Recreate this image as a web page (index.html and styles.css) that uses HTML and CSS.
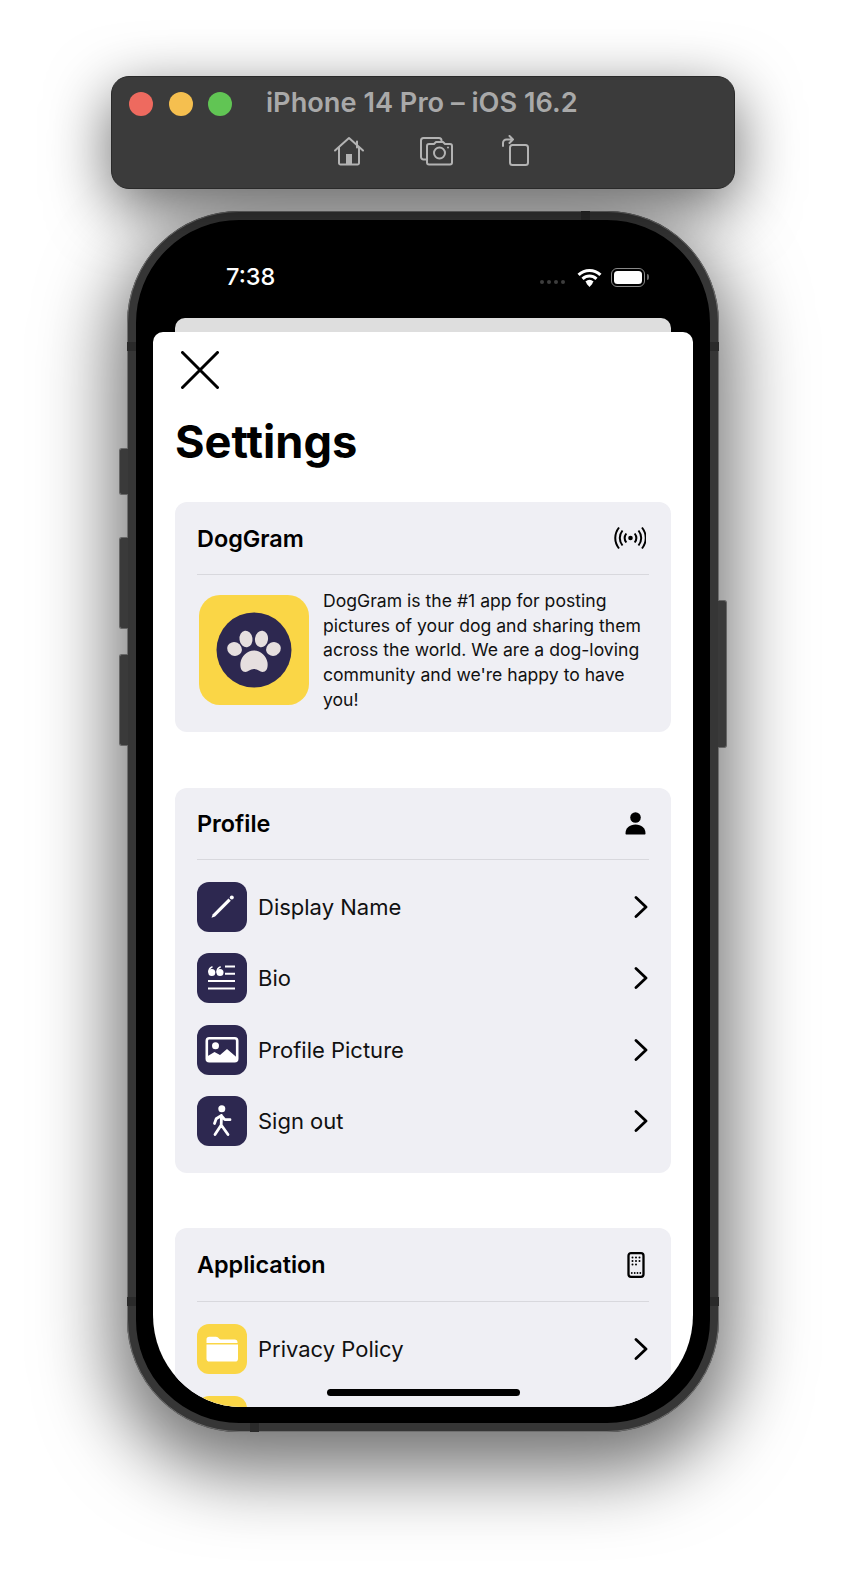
FILE: index.html
```html
<!DOCTYPE html>
<html lang="en">
<head>
<meta charset="utf-8">
<title>DogGram Settings</title>
<link rel="stylesheet" href="styles.css">
</head>
<body>
<div class="stage">
  <header class="toolbar">
    <div class="toolbar-top">
      <div class="lights"><span class="light red"></span><span class="light yellow"></span><span class="light green"></span></div>
      <div class="sim-title">iPhone 14 Pro – iOS 16.2</div>
    </div>
    <div class="toolbar-icons">
      <svg class="tool" width="32" height="32" viewBox="0 0 32 32"><path d="M2 15.500 16 3l14 12.500M6 12.500V28a1.500 1.500 0 0 0 1.500 1.500h17A1.500 1.500 0 0 0 26 28V12.500M24 6.500v6" /><rect class="solid" x="13" y="19" width="6" height="10.500"/></svg>
      <svg class="tool" width="34" height="30" viewBox="0 0 34 30"><path d="M7 23.500H4.500A2.500 2.500 0 0 1 2 21V4.500A2.500 2.500 0 0 1 4.500 2H20a2.500 2.500 0 0 1 2.500 2.500V6"/><path d="M10 8h5l2-2h7l2 2h5a2 2 0 0 1 2 2v16.500a2 2 0 0 1-2 2H10a2 2 0 0 1-2-2V10a2 2 0 0 1 2-2z"/><circle cx="20.500" cy="17" r="5.500"/><circle class="solid" cx="29" cy="11.500" r="1"/></svg>
      <svg class="tool tool-rotate" width="30" height="32" viewBox="0 0 30 32"><rect x="9" y="10" width="18" height="20" rx="2.500"/><path d="M2 11V8a3.500 3.500 0 0 1 3.500-3.500H12M8.500 1 12 4.500 8.500 8"/></svg>
    </div>
  </header>

  <main class="phone">
    <span class="btn btn-mute"></span>
    <span class="btn btn-up"></span>
    <span class="btn btn-down"></span>
    <span class="btn btn-power"></span>
    <span class="band band-l1"></span>
    <span class="band band-r1"></span>
    <span class="band band-l2"></span>
    <span class="band band-r2"></span>
    <span class="band band-top"></span>
    <span class="band band-bottom"></span>

    <div class="status">
      <div class="time">7:38</div>
      <div class="status-right">
        <div class="dots"><i></i><i></i><i></i><i></i></div>
        <svg class="wifi-icon" width="25" height="19" viewBox="0 0 24 18"><path class="wifi" d="M1.500 6.500C7.500.8 16.500.8 22.500 6.500M5.300 10.300c4-3.700 9.400-3.700 13.400 0M9 14c1.900-1.500 4.100-1.500 6 0"/><path class="wifi-dot" d="M12 18l-3-3.200c1.800-1.300 4.200-1.300 6 0z"/></svg>
        <div class="battery"><div class="battery-fill"></div></div>
      </div>
    </div>

    <div class="behind"></div>
    <div class="sheet">
      <svg class="close" width="38" height="38" viewBox="0 0 38 38"><path d="M1.500 1.500l35 35M36.500 1.500l-35 35"/></svg>
      <h1 class="title">Settings</h1>

      <section class="card card-first">
        <div class="card-head">
          <h2>DogGram</h2>
          <svg class="head-icon radio" width="32" height="24" viewBox="3 0 29 24"><circle cx="18" cy="12" r="2.300" class="fill"/><path d="M13.800 7.500c-2 2.700-2 6.300 0 9M22.200 7.500c2 2.700 2 6.300 0 9M10 4.500c-3.600 4.500-3.600 10.500 0 15M26 4.500c3.600 4.500 3.600 10.500 0 15M6.500 1.500c-5 6.500-5 14.500 0 21M29.500 1.500c5 6.500 5 14.500 0 21"/></svg>
        </div>
        <div class="about">
          <svg class="logo" width="110" height="110" viewBox="0 0 110 110">
            <rect width="110" height="110" rx="21" fill="#fad646"/>
            <circle cx="55" cy="55" r="37.500" fill="#2d2850"/>
            <g fill="#e6dfdf">
              <ellipse cx="35.500" cy="54" rx="7.500" ry="6.800" transform="rotate(25 35.500 54)"/>
              <ellipse cx="47" cy="44" rx="6.500" ry="8.300" transform="rotate(-8 47 44)"/>
              <ellipse cx="62.500" cy="44" rx="6.500" ry="8.300" transform="rotate(8 62.500 44)"/>
              <ellipse cx="74.500" cy="54" rx="7.500" ry="6.800" transform="rotate(-25 74.500 54)"/>
              <path d="M55 55.500c7 0 12.500 6 13.500 12 .7 5.500-1 9.500-5 9.500-2.500 0-4.500-3-8.500-3S49 77 46.500 77c-4 0-5.700-4-5-9.500 1-6 6.500-12 13.500-12z"/>
            </g>
          </svg>
          <p>DogGram is the #1 app for posting pictures of your dog and sharing them across the world. We are a dog-loving community and we're happy to have you!</p>
        </div>
      </section>

      <section class="card card-profile">
        <div class="card-head">
          <h2>Profile</h2>
          <svg class="head-icon person" width="32" height="24" viewBox="0 0 32 24"><circle cx="21.500" cy="6.500" r="5.300" class="fill"/><path class="fill" d="M11.500 22.500c0-5.500 4-9 10-9s10 3.500 10 9c0 .7-.4 1-1 1h-18c-.6 0-1-.3-1-1z"/></svg>
        </div>
        <div class="rows">
          <div class="row">
            <div class="tile dark"><svg width="50" height="50" viewBox="0 0 50 50"><path class="ico-fill" d="M14.500 35.800l1.300-3.600L31.500 16.500l2.300 2.300L18.100 34.500z"/><circle class="ico-fill" cx="34.800" cy="15.500" r="2"/></svg></div>
            <span class="label">Display Name</span>
            <svg class="chev" width="14" height="22" viewBox="0 0 14 22"><path d="M2 1.500 12 11 2 20.500"/></svg>
          </div>
          <div class="row">
            <div class="tile dark"><svg width="50" height="50" viewBox="0 0 50 50"><path class="ico-line" d="M11 28h27M11 35.500h27M28 13.500h10M28 20.800h10"/><circle class="ico-fill" cx="14.800" cy="19.500" r="3.500"/><circle class="ico-fill" cx="23" cy="19.500" r="3.500"/><path class="ico-thin" d="M11.800 19.500c0-3 1.500-5 3.700-5.700M20 19.500c0-3 1.500-5 3.700-5.700"/></svg></div>
            <span class="label">Bio</span>
            <svg class="chev" width="14" height="22" viewBox="0 0 14 22"><path d="M2 1.500 12 11 2 20.500"/></svg>
          </div>
          <div class="row">
            <div class="tile dark"><svg width="50" height="50" viewBox="0 0 50 50"><rect x="9.800" y="13.300" width="30.400" height="23" rx="2.500" class="pic-frame"/><circle cx="18.500" cy="20.700" r="3.500" class="ico-fill"/><path class="ico-fill" d="M10 36v-4.500l7.500-4.500 5.500 3 7-6 10.500 9V36z"/></svg></div>
            <span class="label">Profile Picture</span>
            <svg class="chev" width="14" height="22" viewBox="0 0 14 22"><path d="M2 1.500 12 11 2 20.500"/></svg>
          </div>
          <div class="row">
            <div class="tile dark"><svg width="50" height="50" viewBox="0 0 50 50"><circle cx="24.800" cy="12.800" r="3.500" class="ico-fill"/><path class="ico-walk" d="M24.500 19.500l-.3 9.500 6.800 9.500M24.200 29l-6.200 9.500M24.500 19.500l-5.300 3.300-1.700 4.700M25 20.500l2.800 3.200H33"/></svg></div>
            <span class="label">Sign out</span>
            <svg class="chev" width="14" height="22" viewBox="0 0 14 22"><path d="M2 1.500 12 11 2 20.500"/></svg>
          </div>
        </div>
      </section>

      <section class="card card-app">
        <div class="card-head">
          <h2>Application</h2>
          <svg class="head-icon device" width="32" height="26" viewBox="0 0 32 26"><rect x="15.500" y="1.200" width="15" height="23.600" rx="2.500"/><g class="fill"><circle cx="19.500" cy="5.500" r="1"/><circle cx="23" cy="5.500" r="1"/><circle cx="26.500" cy="5.500" r="1"/><circle cx="19.500" cy="9" r="1"/><circle cx="23" cy="9" r="1"/><circle cx="26.500" cy="9" r="1"/><circle cx="19.500" cy="12.500" r="1"/><circle cx="23" cy="12.500" r="1"/><circle cx="18.800" cy="21" r=".9"/><circle cx="21.700" cy="21" r=".9"/><circle cx="24.500" cy="21" r=".9"/><circle cx="27.300" cy="21" r=".9"/></g></svg>
        </div>
        <div class="rows">
          <div class="row">
            <div class="tile yellow-tile"><svg width="50" height="50" viewBox="0 0 50 50"><path class="ico-fill" d="M9.500 15.500a2.800 2.800 0 0 1 2.800-2.800h6.700c1.500 0 2 .8 3 1.800.7.700 1.200 1 2.500 1h13.200a2.800 2.800 0 0 1 2.800 2.700v.8h-31z"/><path class="ico-fill" d="M9.500 20.500h31.500v14.200a2.800 2.800 0 0 1-2.800 2.800H12.300a2.800 2.800 0 0 1-2.800-2.800z"/></svg></div>
            <span class="label">Privacy Policy</span>
            <svg class="chev" width="14" height="22" viewBox="0 0 14 22"><path d="M2 1.500 12 11 2 20.500"/></svg>
          </div>
          <div class="row">
            <div class="tile yellow-tile"></div>
          </div>
        </div>
      </section>
      <div class="home-bar"></div>
    </div>
  </main>
</div>
</body>
</html>
```
FILE: styles.css
```css
* { box-sizing: border-box; }
html, body { margin: 0; padding: 0; background: #fff; }
body { width: 846px; height: 1584px; overflow: hidden; font-family: "Inter", "Liberation Sans", sans-serif; }
.stage { display: flex; flex-direction: column; align-items: center; padding-top: 76px; height: 1584px; }

.toolbar { position: relative; z-index: 2; width: 624px; height: 113px; background: #3b3b3b; border: 1px solid #2a2a2a; border-radius: 18px; box-shadow: 0 18px 62px rgba(0,0,0,.6); padding: 12px 17px 0; }
.toolbar-top { display: flex; align-items: center; height: 30px; }
.lights { display: flex; gap: 15.500px; }
.light { width: 24px; height: 24px; border-radius: 50%; }
.red { background: #ee6a5f; }
.yellow { background: #f5bf4f; }
.green { background: #61c554; }
.sim-title { margin-left: 34px; margin-bottom: 4px; color: #a9a9a9; font-size: 27.200px; font-weight: 600; white-space: nowrap; }
.toolbar-icons { display: flex; justify-content: center; align-items: center; gap: 54px; margin-top: 16px; margin-left: 18px; }
.tool { fill: none; stroke: #b3b3b3; stroke-width: 2; stroke-linecap: round; stroke-linejoin: round; }
.tool .solid { fill: #b3b3b3; stroke: none; }
.tool-rotate { margin-left: -6px; }

.phone { position: relative; z-index: 1; margin-top: 22px; width: 592px; height: 1221px; background: #000; border: 9px solid #363636; outline: 1.500px solid #6f6f6f; outline-offset: -1.500px; border-radius: 112px; box-shadow: 0 26px 75px 14px rgba(0,0,0,.55); padding: 0 17px 16px; display: flex; flex-direction: column; }
.btn { position: absolute; width: 9px; background: #3a3a3a; border: 1px solid #666; }
.btn-mute { left: -17px; top: 228px; height: 47px; border-radius: 3px 0 0 3px; border-right: 0; }
.btn-up { left: -17px; top: 317px; height: 92px; border-radius: 3px 0 0 3px; border-right: 0; }
.btn-down { left: -17px; top: 434px; height: 92px; border-radius: 3px 0 0 3px; border-right: 0; }
.btn-power { right: -17px; top: 380px; height: 148px; border-radius: 0 3px 3px 0; border-left: 0; }
.band { position: absolute; width: 9px; height: 9px; background: #2a2a2a; }
.band-l1 { left: -9px; top: 122px; }
.band-r1 { right: -9px; top: 122px; }
.band-l2 { left: -9px; top: 1077px; }
.band-r2 { right: -9px; top: 1077px; }
.band-top { left: 445px; top: -9px; }
.band-bottom { left: 114px; bottom: -9px; }

.status { height: 98px; flex: none; display: flex; justify-content: space-between; align-items: flex-start; color: #fff; padding: 42px 48px 0 73px; }
.time { font-size: 23.500px; font-weight: 500; line-height: 30px; }
.status-right { display: flex; align-items: center; gap: 9px; height: 30px; }
.dots { display: flex; gap: 2.500px; margin-top: 10px; margin-right: 3px; }
.dots i { width: 4.500px; height: 4.500px; border-radius: 50%; background: #3d3d3d; }
.wifi { fill: none; stroke: #fff; stroke-width: 3; }
.wifi-dot { fill: #fff; }
.battery { position: relative; width: 34px; height: 19px; padding: 2px; border: 1.500px solid #8a8a8a; border-radius: 6px; }
.battery::after { content: ""; position: absolute; right: -4.500px; top: 5px; width: 2px; height: 6px; border-radius: 0 2px 2px 0; background: #6a6a6a; }
.battery-fill { width: 100%; height: 100%; border-radius: 3.500px; background: #fff; }

.behind { flex: none; height: 14px; margin: 0 22px; background: #dedede; border-radius: 10px 10px 0 0; }
.sheet { position: relative; flex: 1; min-height: 0; background: #fff; border-radius: 10px 10px 88px 88px / 10px 10px 92px 92px; overflow: hidden; padding: 19px 22px 0; }
.close { display: block; margin-left: 6px; fill: none; stroke: #000; stroke-width: 3; stroke-linecap: round; }
.title { margin: 20px 0 0; font-size: 45.200px; line-height: 66px; font-weight: 700; color: #000; }

.card { background: #efeff4; border-radius: 12px; padding: 0 22px; margin-top: 55px; }
.card-first { margin-top: 27px; }
.card-head { display: flex; justify-content: space-between; align-items: center; height: 73px; border-bottom: 1px solid #d8d8dd; }
.card-head h2 { margin: 0; font-size: 23.400px; font-weight: 600; color: #000; }
.head-icon { fill: none; stroke: #000; stroke-width: 1.800; margin-right: 3px; }
.head-icon .fill { fill: #000; stroke: none; }
.radio { stroke-width: 2; }
.person { margin-bottom: 1px; }
.device { stroke-width: 2.300; margin-right: 4px; }
.about { display: flex; align-items: center; gap: 14px; padding: 14px 0 19px 2px; }
.logo { flex: none; margin-bottom: 2px; }
.about p { margin: 0; font-size: 17.600px; line-height: 24.700px; color: #111; }
.rows { display: flex; flex-direction: column; gap: 21.500px; padding: 22px 0 26px; }
.row { display: flex; align-items: center; gap: 11px; height: 50px; }
.tile { flex: none; width: 50px; height: 50px; border-radius: 12px; }
.dark { background: #2d2850; }
.yellow-tile { background: #fad646; }
.label { flex: 1; font-size: 22px; color: #111; }
.chev { flex: none; fill: none; stroke: #000; stroke-width: 2.800; stroke-linecap: round; stroke-linejoin: round; margin-right: 1px; }
.card-profile { margin-top: 56px; }
.card-profile .card-head { height: 72px; }
.card-profile .rows { padding-bottom: 27px; }
.card-app .card-head { height: 74px; }
.ico-fill { fill: #fff; }
.ico-line { fill: none; stroke: #fff; stroke-width: 2; }
.ico-thin { fill: none; stroke: #fff; stroke-width: 1.600; }
.pic-frame { fill: none; stroke: #fff; stroke-width: 2.600; }
.ico-walk { fill: none; stroke: #fff; stroke-width: 2.800; stroke-linecap: round; stroke-linejoin: round; }
.home-bar { position: absolute; left: 174px; bottom: 11px; width: 193px; height: 7px; border-radius: 4px; background: #000; }
```
